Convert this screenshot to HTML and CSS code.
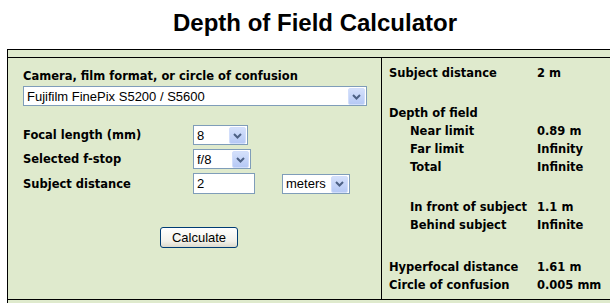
FILE: index.html
```html
<!DOCTYPE html>
<html lang="en">
<head>
    <meta charset="UTF-8">
    <meta name="viewport" content="width=device-width, initial-scale=1.0">
    <title>Depth of Field Calculator</title>
    <link rel="stylesheet" href="styles.css">
</head>
<body>
    <div class="page">
        <h1>Depth of Field Calculator</h1>

        <div class="calc">
            <div class="calc-top"></div>
            <div class="calc-body">
                <form class="inputs" id="dofForm">
                    <label class="field-title" for="camera">Camera, film format, or circle of confusion</label>
                    <div class="select select-wide">
                        <select id="camera">
                            <option>Fujifilm FinePix S5200 / S5600</option>
                        </select>
                        <span class="arrow"><svg width="9" height="6" viewBox="0 0 9 6"><path d="M1 1 L4.5 4.5 L8 1" fill="none" stroke="#4d6185" stroke-width="2"/></svg></span>
                    </div>

                    <div class="form-rows">
                        <label for="focal">Focal length (mm)</label>
                        <div class="field">
                            <div class="select select-focal">
                                <select id="focal"><option>8</option></select>
                                <span class="arrow"><svg width="9" height="6" viewBox="0 0 9 6"><path d="M1 1 L4.5 4.5 L8 1" fill="none" stroke="#4d6185" stroke-width="2"/></svg></span>
                            </div>
                        </div>

                        <label for="fstop">Selected f-stop</label>
                        <div class="field">
                            <div class="select select-fstop">
                                <select id="fstop"><option>f/8</option></select>
                                <span class="arrow"><svg width="9" height="6" viewBox="0 0 9 6"><path d="M1 1 L4.5 4.5 L8 1" fill="none" stroke="#4d6185" stroke-width="2"/></svg></span>
                            </div>
                        </div>

                        <label for="distance">Subject distance</label>
                        <div class="field">
                            <input id="distance" class="text-input" type="text" value="2">
                            <div class="select select-units">
                                <select id="units"><option>meters</option></select>
                                <span class="arrow"><svg width="9" height="6" viewBox="0 0 9 6"><path d="M1 1 L4.5 4.5 L8 1" fill="none" stroke="#4d6185" stroke-width="2"/></svg></span>
                            </div>
                        </div>
                    </div>

                    <div class="actions">
                        <button type="submit">Calculate</button>
                    </div>
                </form>

                <div class="results">
                    <div class="row"><span>Subject distance</span><span>2 m</span></div>

                    <div class="row gap"><span>Depth of field</span><span></span></div>
                    <div class="row sub"><span>Near limit</span><span>0.89 m</span></div>
                    <div class="row sub"><span>Far limit</span><span>Infinity</span></div>
                    <div class="row sub"><span>Total</span><span>Infinite</span></div>

                    <div class="row sub gap"><span>In front of subject</span><span>1.1 m</span></div>
                    <div class="row sub"><span>Behind subject</span><span>Infinite</span></div>

                    <div class="row gap-lg"><span>Hyperfocal distance</span><span>1.61 m</span></div>
                    <div class="row"><span>Circle of confusion</span><span>0.005 mm</span></div>
                </div>
            </div>
            <div class="calc-foot"></div>
        </div>
    </div>
</body>
</html>
```

FILE: styles.css
```css
html {
    overflow: hidden;
}
body {
    margin: 0;
    background: #fff;
    color: #000;
    font-family: "DejaVu Sans", Verdana, sans-serif;
}
.page {
    width: 616px;
    padding: 0 7px;
}
h1 {
    font-family: "Liberation Sans", Arial, sans-serif;
    font-size: 24px;
    line-height: 28px;
    text-align: center;
    margin: 9px 0 12px;
}
.calc {
    border: 1px solid #000;
    border-bottom: none;
    background: #dfeacd;
}
.calc-top {
    height: 7px;
    border-bottom: 1px solid #000;
}
.calc-body {
    display: flex;
    height: 241px;
    border-bottom: 1px solid #000;
}
.calc-foot {
    height: 20px;
}

/* left side: inputs */
.inputs {
    width: 344px;
    padding: 11px 14px 0 15px;
    border-right: 1px solid #000;
    font-size: 11.5px;
    font-weight: bold;
}
.field-title {
    display: block;
    line-height: 14px;
    height: 17px;
}
.select {
    position: relative;
    height: 20px;
    box-sizing: border-box;
    border: 1px solid #7f9db9;
    background: #fff;
}
.select select {
    -webkit-appearance: none;
    appearance: none;
    border: none;
    background: transparent;
    width: 100%;
    height: 18px;
    padding: 0 0 0 3px;
    margin: 0;
    font-family: "Liberation Sans", Arial, sans-serif;
    font-size: 13px;
    color: #000;
    outline: none;
}
.arrow {
    position: absolute;
    top: 1px;
    right: 1px;
    width: 15px;
    height: 15px;
    border: 1px solid #d2defb;
    border-radius: 2px;
    background: linear-gradient(#d4e0fb, #b6c9f5);
    display: flex;
    align-items: center;
    justify-content: center;
}
.select-wide {
    width: 344px;
}
.select-focal {
    width: 55px;
}
.select-fstop {
    width: 58px;
}
.select-units {
    width: 68px;
    margin-left: 27px;
}
.form-rows {
    display: grid;
    grid-template-columns: 170px 1fr;
    row-gap: 4px;
    margin-top: 19px;
    align-items: center;
}
.form-rows label {
    line-height: 20px;
}
.field {
    display: flex;
    align-items: center;
}
.text-input {
    width: 62px;
    height: 21px;
    box-sizing: border-box;
    border: 1px solid #7f9db9;
    padding: 0 0 0 3px;
    margin: 0;
    font-family: "Liberation Sans", Arial, sans-serif;
    font-size: 13px;
    outline: none;
}
.actions {
    margin-top: 33px;
    padding-left: 137px;
}
button {
    width: 78px;
    height: 21px;
    border: 1px solid #003c74;
    border-radius: 3px;
    background: linear-gradient(#ffffff, #f2f1ea 70%, #dcd9cc);
    font-family: "Liberation Sans", Arial, sans-serif;
    font-size: 13px;
    color: #000;
    padding: 0;
    cursor: pointer;
}

/* right side: results */
.results {
    flex: 1;
    padding: 6px 0 0 7px;
    font-size: 11.5px;
    font-weight: bold;
}
.row {
    display: grid;
    grid-template-columns: 148px 1fr;
    line-height: 18px;
    white-space: nowrap;
}
.row.sub span:first-child {
    padding-left: 21px;
}
.row.gap {
    margin-top: 22px;
}
.row.gap-lg {
    margin-top: 24px;
}
```
